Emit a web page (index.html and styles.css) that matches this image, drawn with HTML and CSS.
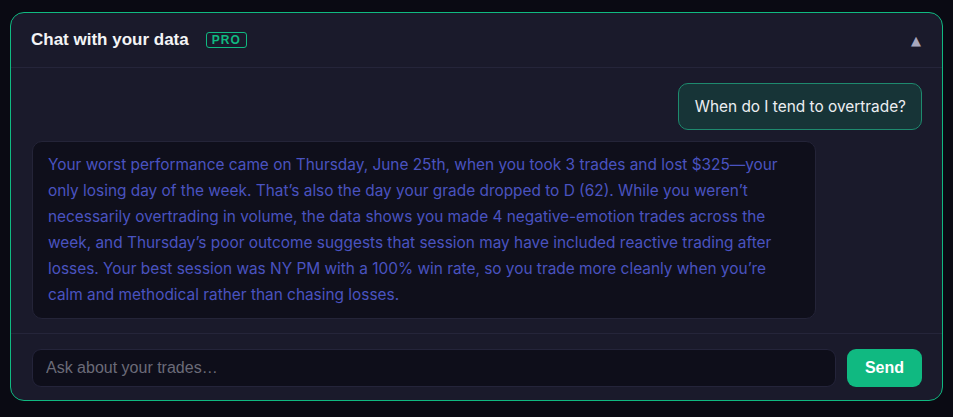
FILE: index.html
```html
<!DOCTYPE html>
<html lang="en">
<head>
    <meta charset="UTF-8">
    <meta name="viewport" content="width=device-width, initial-scale=1.0">
    <title>Chat with your data</title>
    <link rel="stylesheet" href="styles.css">
</head>
<body>

    <div class="chat-card">
        <div class="chat-header">
            <span class="chat-title">Chat with your data</span>
            <span class="pro-badge">PRO</span>
            <span class="collapse-toggle">&#9650;</span>
        </div>

        <div class="chat-messages">
            <div class="msg msg-user">When do I tend to overtrade?</div>
            <div class="msg msg-bot">Your worst performance came on Thursday, June 25th, when you took 3 trades and lost $325—your only losing day of the week. That’s also the day your grade dropped to D (62). While you weren’t necessarily overtrading in volume, the data shows you made 4 negative-emotion trades across the week, and Thursday’s poor outcome suggests that session may have included reactive trading after losses. Your best session was NY PM with a 100% win rate, so you trade more cleanly when you’re calm and methodical rather than chasing losses.</div>
        </div>

        <div class="chat-footer">
            <input type="text" class="chat-input" placeholder="Ask about your trades…">
            <button class="send-btn">Send</button>
        </div>
    </div>

</body>
</html>
```

FILE: styles.css
```css
body {
    margin: 0;
    padding: 12px 10px 16px 10px;
    background-color: #0a0a13;
}

.chat-card {
    background-color: #1a1a2b;
    border: 1px solid #10b981;
    border-radius: 14px;
    overflow: hidden;
}

.chat-header {
    display: flex;
    align-items: center;
    height: 54px;
    padding: 0 20px 0 20px;
    border-bottom: 1px solid #25253a;
}

.chat-title {
    font-family: "Liberation Sans", Arial, sans-serif;
    font-weight: bold;
    font-size: 17px;
    color: #f3f4f6;
}

.pro-badge {
    margin-left: 17px;
    padding: 1px 5px;
    border: 1px solid #10b981;
    border-radius: 3px;
    font-family: "Liberation Sans", Arial, sans-serif;
    font-weight: bold;
    font-size: 12px;
    letter-spacing: 1px;
    line-height: 12px;
    color: #10b981;
}

.collapse-toggle {
    margin-left: auto;
    margin-right: 1px;
    font-family: "DejaVu Sans", sans-serif;
    font-size: 13px;
    color: #a8a8be;
    cursor: pointer;
}

.chat-messages {
    display: flex;
    flex-direction: column;
    gap: 11px;
    padding: 15px 20px 14px 21px;
    border-bottom: 1px solid #25253a;
}

.msg {
    font-family: Inter, "Noto Sans", sans-serif;
    font-size: 15.4px;
    border-radius: 10px;
}

.msg-user {
    align-self: flex-end;
    padding: 11px 15px 11px 16px;
    background-color: #173437;
    border: 1px solid #1e8a6e;
    color: #eceef2;
    line-height: 23px;
}

.msg-bot {
    align-self: flex-start;
    width: 752px;
    padding: 10px 15px 10px 15px;
    background-color: #0f0f1b;
    border: 1px solid #242438;
    color: #4a53c0;
    line-height: 26px;
}

.chat-footer {
    display: flex;
    gap: 11px;
    padding: 15px 20px 13px 21px;
}

.chat-input {
    flex: 1;
    height: 38px;
    box-sizing: border-box;
    padding: 0 13px;
    background-color: #0e0e1a;
    border: 1px solid #24243a;
    border-radius: 9px;
    font-family: "Liberation Sans", Arial, sans-serif;
    font-size: 16px;
    color: #e5e7eb;
    outline: none;
}

.chat-input::placeholder {
    color: #6b6b78;
}

.send-btn {
    width: 75px;
    height: 38px;
    border: none;
    border-radius: 9px;
    background-color: #10b981;
    font-family: "Liberation Sans", Arial, sans-serif;
    font-weight: bold;
    font-size: 16px;
    color: #ffffff;
    cursor: pointer;
}
```
